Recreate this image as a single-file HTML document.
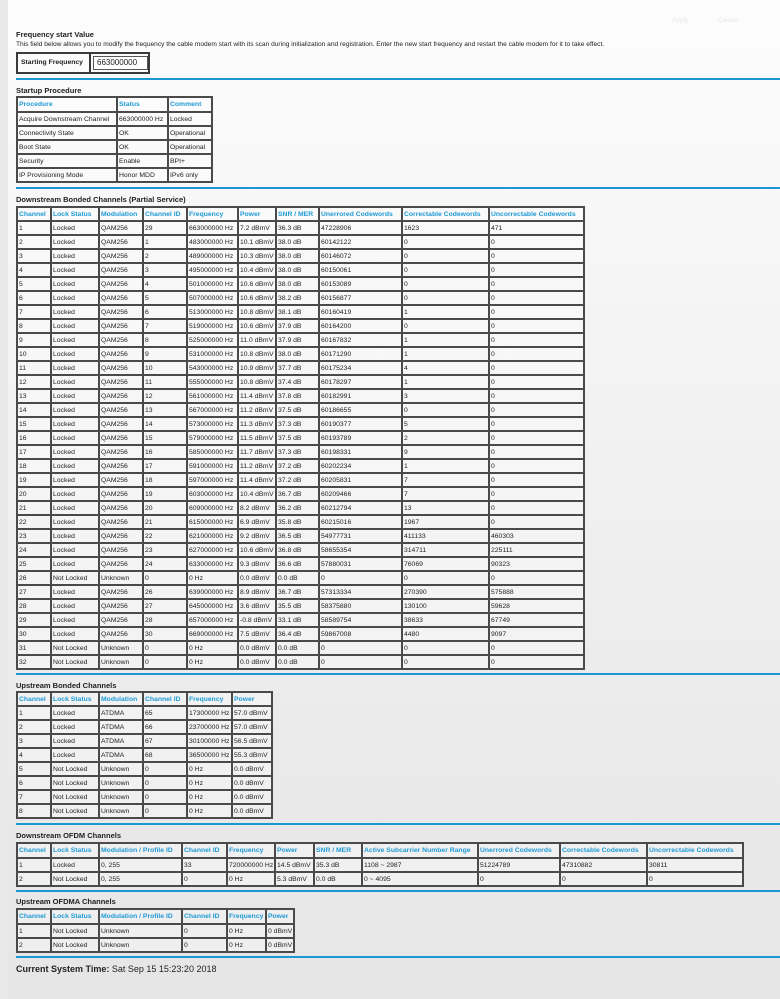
<!DOCTYPE html>
<html><head><meta charset="utf-8">
<style>
html,body{margin:0;padding:0;}
body{width:780px;height:999px;position:relative;overflow:hidden;font-family:"Liberation Sans",Arial,sans-serif;color:#222;
background:linear-gradient(#fdfdfd 0px,#f7f7f7 200px,#f0f0f0 500px,#e9e9e9 800px,#e6e6e6 999px);}
.strip{position:absolute;left:0;top:0;width:8px;height:999px;background:#e9e9e9;}
.a{position:absolute;}
.h{font-size:7.5px;font-weight:bold;white-space:nowrap;}
.line{position:absolute;left:16px;right:0;height:2px;background:#1a98cf;}
table{border-collapse:collapse;table-layout:fixed;border:2px solid #3a3a3a;}
td{border:2px solid #4a4a4a;padding:0 1px;font-size:6.8px;line-height:9px;height:12px;box-sizing:border-box;white-space:nowrap;overflow:hidden;vertical-align:middle;background:rgba(255,255,255,0.35);}
tr{height:14px;}
tr.hd td{color:#1e9ad6;font-weight:bold;}
</style></head><body>
<div class="strip"></div>
<div class="a" style="left:672px;top:17px;font-size:6.5px;color:#e6e6e6">Apply</div>
<div class="a" style="left:718px;top:17px;font-size:6.5px;color:#e6e6e6">Cancel</div>

<div class="a h" style="left:16px;top:30px">Frequency start Value</div>
<div class="a" style="left:16px;top:41px;font-size:6.6px;white-space:nowrap">This field below allows you to modify the frequency the cable modem start with its scan during initialization and registration. Enter the new start frequency and restart the cable modem for it to take effect.</div>
<div class="a" style="left:16px;top:52px;width:130px;height:18px;border:2px solid #3a3a3a;">
 <div class="a" style="left:0;top:0;width:68px;height:18px;border-right:2px solid #3a3a3a;font-size:6.8px;font-weight:bold;line-height:18px;padding-left:3px">Starting Frequency</div>
 <div class="a" style="left:75px;top:2px;width:55px;height:14px;box-sizing:border-box;border:1px solid #555;background:#fff;font-size:8px;line-height:12px;padding-left:3px">663000000</div>
</div>
<div class="line" style="top:78px"></div>

<div class="a h" style="left:16px;top:86px">Startup Procedure</div>
<table class="a" style="left:16px;top:96px;width:197px">
<tr class="hd" style="height:15px"><td style="width:100px">Procedure</td><td style="width:51px">Status</td><td>Comment</td></tr>
<tr><td>Acquire Downstream Channel</td><td>663000000 Hz</td><td>Locked</td></tr>
<tr><td>Connectivity State</td><td>OK</td><td>Operational</td></tr>
<tr><td>Boot State</td><td>OK</td><td>Operational</td></tr>
<tr><td>Security</td><td>Enable</td><td>BPI+</td></tr>
<tr><td>IP Provisioning Mode</td><td>Honor MDD</td><td>IPv6 only</td></tr>
</table>
<div class="line" style="top:187px"></div>

<div class="a h" style="left:16px;top:195px">Downstream Bonded Channels (Partial Service)</div>
<table class="a" style="left:16px;top:206px;width:569px">
<tr class="hd"><td style="width:34px">Channel</td><td style="width:48px">Lock Status</td><td style="width:44px">Modulation</td><td style="width:44px">Channel ID</td><td style="width:51px">Frequency</td><td style="width:38px">Power</td><td style="width:43px">SNR / MER</td><td style="width:83px">Unerrored Codewords</td><td style="width:87px">Correctable Codewords</td><td>Uncorrectable Codewords</td></tr>
<tr><td>1</td><td>Locked</td><td>QAM256</td><td>29</td><td>663000000 Hz</td><td>7.2 dBmV</td><td>36.3 dB</td><td>47228906</td><td>1623</td><td>471</td></tr>
<tr><td>2</td><td>Locked</td><td>QAM256</td><td>1</td><td>483000000 Hz</td><td>10.1 dBmV</td><td>38.0 dB</td><td>60142122</td><td>0</td><td>0</td></tr>
<tr><td>3</td><td>Locked</td><td>QAM256</td><td>2</td><td>489000000 Hz</td><td>10.3 dBmV</td><td>38.0 dB</td><td>60146072</td><td>0</td><td>0</td></tr>
<tr><td>4</td><td>Locked</td><td>QAM256</td><td>3</td><td>495000000 Hz</td><td>10.4 dBmV</td><td>38.0 dB</td><td>60150061</td><td>0</td><td>0</td></tr>
<tr><td>5</td><td>Locked</td><td>QAM256</td><td>4</td><td>501000000 Hz</td><td>10.6 dBmV</td><td>38.0 dB</td><td>60153089</td><td>0</td><td>0</td></tr>
<tr><td>6</td><td>Locked</td><td>QAM256</td><td>5</td><td>507000000 Hz</td><td>10.6 dBmV</td><td>38.2 dB</td><td>60156877</td><td>0</td><td>0</td></tr>
<tr><td>7</td><td>Locked</td><td>QAM256</td><td>6</td><td>513000000 Hz</td><td>10.8 dBmV</td><td>38.1 dB</td><td>60160419</td><td>1</td><td>0</td></tr>
<tr><td>8</td><td>Locked</td><td>QAM256</td><td>7</td><td>519000000 Hz</td><td>10.6 dBmV</td><td>37.9 dB</td><td>60164200</td><td>0</td><td>0</td></tr>
<tr><td>9</td><td>Locked</td><td>QAM256</td><td>8</td><td>525000000 Hz</td><td>11.0 dBmV</td><td>37.9 dB</td><td>60167832</td><td>1</td><td>0</td></tr>
<tr><td>10</td><td>Locked</td><td>QAM256</td><td>9</td><td>531000000 Hz</td><td>10.8 dBmV</td><td>38.0 dB</td><td>60171290</td><td>1</td><td>0</td></tr>
<tr><td>11</td><td>Locked</td><td>QAM256</td><td>10</td><td>543000000 Hz</td><td>10.9 dBmV</td><td>37.7 dB</td><td>60175234</td><td>4</td><td>0</td></tr>
<tr><td>12</td><td>Locked</td><td>QAM256</td><td>11</td><td>555000000 Hz</td><td>10.8 dBmV</td><td>37.4 dB</td><td>60178297</td><td>1</td><td>0</td></tr>
<tr><td>13</td><td>Locked</td><td>QAM256</td><td>12</td><td>561000000 Hz</td><td>11.4 dBmV</td><td>37.8 dB</td><td>60182991</td><td>3</td><td>0</td></tr>
<tr><td>14</td><td>Locked</td><td>QAM256</td><td>13</td><td>567000000 Hz</td><td>11.2 dBmV</td><td>37.5 dB</td><td>60186655</td><td>0</td><td>0</td></tr>
<tr><td>15</td><td>Locked</td><td>QAM256</td><td>14</td><td>573000000 Hz</td><td>11.3 dBmV</td><td>37.3 dB</td><td>60190377</td><td>5</td><td>0</td></tr>
<tr><td>16</td><td>Locked</td><td>QAM256</td><td>15</td><td>579000000 Hz</td><td>11.5 dBmV</td><td>37.5 dB</td><td>60193789</td><td>2</td><td>0</td></tr>
<tr><td>17</td><td>Locked</td><td>QAM256</td><td>16</td><td>585000000 Hz</td><td>11.7 dBmV</td><td>37.3 dB</td><td>60198331</td><td>9</td><td>0</td></tr>
<tr><td>18</td><td>Locked</td><td>QAM256</td><td>17</td><td>591000000 Hz</td><td>11.2 dBmV</td><td>37.2 dB</td><td>60202234</td><td>1</td><td>0</td></tr>
<tr><td>19</td><td>Locked</td><td>QAM256</td><td>18</td><td>597000000 Hz</td><td>11.4 dBmV</td><td>37.2 dB</td><td>60205831</td><td>7</td><td>0</td></tr>
<tr><td>20</td><td>Locked</td><td>QAM256</td><td>19</td><td>603000000 Hz</td><td>10.4 dBmV</td><td>36.7 dB</td><td>60209466</td><td>7</td><td>0</td></tr>
<tr><td>21</td><td>Locked</td><td>QAM256</td><td>20</td><td>609000000 Hz</td><td>8.2 dBmV</td><td>36.2 dB</td><td>60212794</td><td>13</td><td>0</td></tr>
<tr><td>22</td><td>Locked</td><td>QAM256</td><td>21</td><td>615000000 Hz</td><td>6.9 dBmV</td><td>35.8 dB</td><td>60215016</td><td>1967</td><td>0</td></tr>
<tr><td>23</td><td>Locked</td><td>QAM256</td><td>22</td><td>621000000 Hz</td><td>9.2 dBmV</td><td>36.5 dB</td><td>54977731</td><td>411133</td><td>460303</td></tr>
<tr><td>24</td><td>Locked</td><td>QAM256</td><td>23</td><td>627000000 Hz</td><td>10.6 dBmV</td><td>36.8 dB</td><td>58655354</td><td>314711</td><td>225111</td></tr>
<tr><td>25</td><td>Locked</td><td>QAM256</td><td>24</td><td>633000000 Hz</td><td>9.3 dBmV</td><td>36.6 dB</td><td>57880031</td><td>76069</td><td>90323</td></tr>
<tr><td>26</td><td>Not Locked</td><td>Unknown</td><td>0</td><td>0 Hz</td><td>0.0 dBmV</td><td>0.0 dB</td><td>0</td><td>0</td><td>0</td></tr>
<tr><td>27</td><td>Locked</td><td>QAM256</td><td>26</td><td>639000000 Hz</td><td>8.9 dBmV</td><td>36.7 dB</td><td>57313334</td><td>270390</td><td>575888</td></tr>
<tr><td>28</td><td>Locked</td><td>QAM256</td><td>27</td><td>645000000 Hz</td><td>3.6 dBmV</td><td>35.5 dB</td><td>58375880</td><td>130100</td><td>59628</td></tr>
<tr><td>29</td><td>Locked</td><td>QAM256</td><td>28</td><td>657000000 Hz</td><td>-0.8 dBmV</td><td>33.1 dB</td><td>58589754</td><td>38633</td><td>67749</td></tr>
<tr><td>30</td><td>Locked</td><td>QAM256</td><td>30</td><td>669000000 Hz</td><td>7.5 dBmV</td><td>36.4 dB</td><td>59867008</td><td>4480</td><td>9097</td></tr>
<tr><td>31</td><td>Not Locked</td><td>Unknown</td><td>0</td><td>0 Hz</td><td>0.0 dBmV</td><td>0.0 dB</td><td>0</td><td>0</td><td>0</td></tr>
<tr><td>32</td><td>Not Locked</td><td>Unknown</td><td>0</td><td>0 Hz</td><td>0.0 dBmV</td><td>0.0 dB</td><td>0</td><td>0</td><td>0</td></tr>
</table>
<div class="line" style="top:673px"></div>

<div class="a h" style="left:16px;top:681px">Upstream Bonded Channels</div>
<table class="a" style="left:16px;top:691px;width:257px">
<tr class="hd"><td style="width:34px">Channel</td><td style="width:48px">Lock Status</td><td style="width:44px">Modulation</td><td style="width:44px">Channel ID</td><td style="width:45px">Frequency</td><td>Power</td></tr>
<tr><td>1</td><td>Locked</td><td>ATDMA</td><td>65</td><td>17300000 Hz</td><td>57.0 dBmV</td></tr>
<tr><td>2</td><td>Locked</td><td>ATDMA</td><td>66</td><td>23700000 Hz</td><td>57.0 dBmV</td></tr>
<tr><td>3</td><td>Locked</td><td>ATDMA</td><td>67</td><td>30100000 Hz</td><td>56.5 dBmV</td></tr>
<tr><td>4</td><td>Locked</td><td>ATDMA</td><td>68</td><td>36500000 Hz</td><td>55.3 dBmV</td></tr>
<tr><td>5</td><td>Not Locked</td><td>Unknown</td><td>0</td><td>0 Hz</td><td>0.0 dBmV</td></tr>
<tr><td>6</td><td>Not Locked</td><td>Unknown</td><td>0</td><td>0 Hz</td><td>0.0 dBmV</td></tr>
<tr><td>7</td><td>Not Locked</td><td>Unknown</td><td>0</td><td>0 Hz</td><td>0.0 dBmV</td></tr>
<tr><td>8</td><td>Not Locked</td><td>Unknown</td><td>0</td><td>0 Hz</td><td>0.0 dBmV</td></tr>
</table>
<div class="line" style="top:823px"></div>

<div class="a h" style="left:16px;top:831px">Downstream OFDM Channels</div>
<table class="a" style="left:16px;top:842px;width:728px">
<tr class="hd" style="height:15px"><td style="width:34px">Channel</td><td style="width:48px">Lock Status</td><td style="width:83px">Modulation / Profile ID</td><td style="width:45px">Channel ID</td><td style="width:48px">Frequency</td><td style="width:39px">Power</td><td style="width:48px">SNR / MER</td><td style="width:116px">Active Subcarrier Number Range</td><td style="width:82px">Unerrored Codewords</td><td style="width:87px">Correctable Codewords</td><td>Uncorrectable Codewords</td></tr>
<tr><td>1</td><td>Locked</td><td>0, 255</td><td>33</td><td>720000000 Hz</td><td>14.5 dBmV</td><td>35.3 dB</td><td>1108 ~ 2987</td><td>51224789</td><td>47310882</td><td>30811</td></tr>
<tr><td>2</td><td>Not Locked</td><td>0, 255</td><td>0</td><td>0 Hz</td><td>5.3 dBmV</td><td>0.0 dB</td><td>0 ~ 4095</td><td>0</td><td>0</td><td>0</td></tr>
</table>
<div class="line" style="top:890px"></div>

<div class="a h" style="left:16px;top:897px">Upstream OFDMA Channels</div>
<table class="a" style="left:16px;top:908px;width:279px">
<tr class="hd" style="height:15px"><td style="width:34px">Channel</td><td style="width:48px">Lock Status</td><td style="width:83px">Modulation / Profile ID</td><td style="width:45px">Channel ID</td><td style="width:39px">Frequency</td><td>Power</td></tr>
<tr><td>1</td><td>Not Locked</td><td>Unknown</td><td>0</td><td>0 Hz</td><td>0 dBmV</td></tr>
<tr><td>2</td><td>Not Locked</td><td>Unknown</td><td>0</td><td>0 Hz</td><td>0 dBmV</td></tr>
</table>
<div class="line" style="top:956px"></div>

<div class="a" style="left:16px;top:964px;font-size:9px;font-weight:bold;white-space:nowrap">Current System Time: <span style="font-weight:normal">Sat Sep 15 15:23:20 2018</span></div>
</body></html>
